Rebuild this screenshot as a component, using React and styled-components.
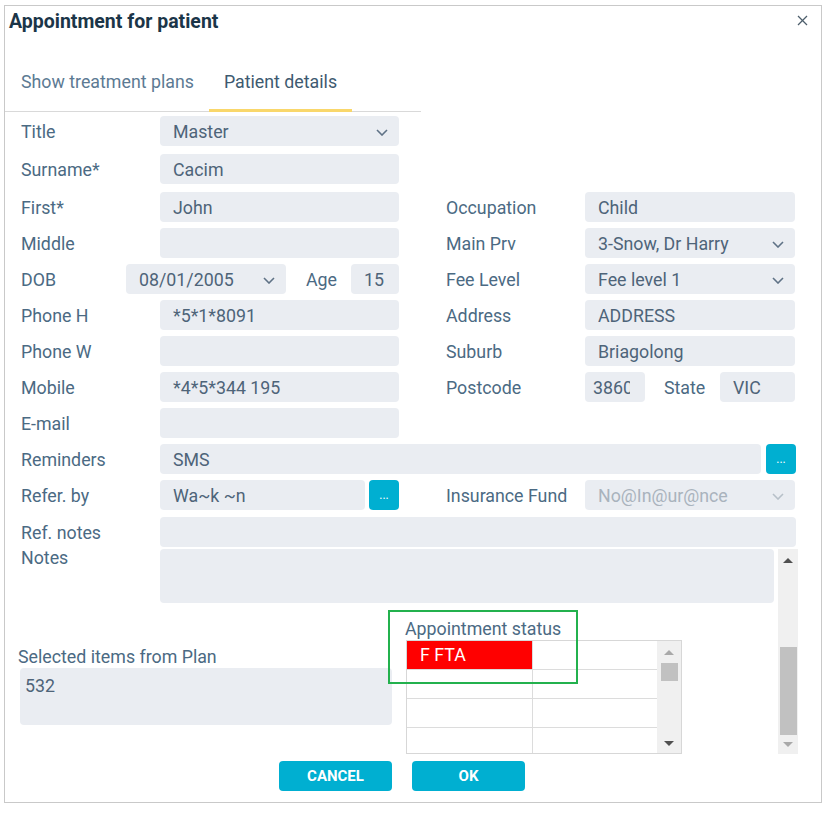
import React from 'react';
import styled, { createGlobalStyle } from 'styled-components';

const GlobalStyle = createGlobalStyle`
  * { box-sizing: border-box; }
  body {
    margin: 0;
    background: #fff;
    font-family: Roboto, "Liberation Sans", sans-serif;
  }
`;

const Chevron = ({ muted }) => (
  <svg width="12" height="7" viewBox="0 0 12 7">
    <polyline points="1,1 6,6 11,1" fill="none" stroke={muted ? '#b7c0c9' : '#5f7286'} strokeWidth="1.6" />
  </svg>
);

const CloseIcon = () => (
  <svg width="11" height="11" viewBox="0 0 11 11">
    <line x1="1" y1="1" x2="10" y2="10" stroke="#4d5e6c" strokeWidth="1.2" />
    <line x1="10" y1="1" x2="1" y2="10" stroke="#4d5e6c" strokeWidth="1.2" />
  </svg>
);

const App = () => {
  return (
    <>
      <GlobalStyle />
      <Dialog>
        <Header>
          <Title>Appointment for patient</Title>
          <CloseButton><CloseIcon /></CloseButton>
        </Header>

        <TabBar>
          <Tab>Show treatment plans</Tab>
          <Tab $active>Patient details</Tab>
        </TabBar>

        <Form>
          <Row $mb={2}>
            <Half>
              <Label>Title</Label>
              <Field><Value>Master</Value><Chevron /></Field>
            </Half>
          </Row>
          <Row $mb={2}>
            <Half>
              <Label>Surname*</Label>
              <Field><Value>Cacim</Value></Field>
            </Half>
          </Row>
          <Row>
            <Half>
              <Label>First*</Label>
              <Field><Value>John</Value></Field>
            </Half>
            <Half>
              <Label>Occupation</Label>
              <Field><Value>Child</Value></Field>
            </Half>
          </Row>
          <Row>
            <Half>
              <Label>Middle</Label>
              <Field />
            </Half>
            <Half>
              <Label>Main Prv</Label>
              <Field><Value>3-Snow, Dr Harry</Value><Chevron /></Field>
            </Half>
          </Row>
          <Row>
            <Half>
              <Label $w={105}>DOB</Label>
              <Field $w={160}><Value>08/01/2005</Value><Chevron /></Field>
              <Label $w={45} $ml={20}>Age</Label>
              <Field><Value>15</Value></Field>
            </Half>
            <Half>
              <Label>Fee Level</Label>
              <Field><Value>Fee level 1</Value><Chevron /></Field>
            </Half>
          </Row>
          <Row>
            <Half>
              <Label>Phone H</Label>
              <Field><Value>*5*1*8091</Value></Field>
            </Half>
            <Half>
              <Label>Address</Label>
              <Field><Value>ADDRESS</Value></Field>
            </Half>
          </Row>
          <Row>
            <Half>
              <Label>Phone W</Label>
              <Field />
            </Half>
            <Half>
              <Label>Suburb</Label>
              <Field><Value>Briagolong</Value></Field>
            </Half>
          </Row>
          <Row>
            <Half>
              <Label>Mobile</Label>
              <Field><Value>*4*5*344 195</Value></Field>
            </Half>
            <Half>
              <Label>Postcode</Label>
              <Field $w={60} $pl={8} $pr={15}><Value>3860</Value></Field>
              <Label $w={56} $ml={19}>State</Label>
              <Field><Value>VIC</Value></Field>
            </Half>
          </Row>
          <Row>
            <Half>
              <Label>E-mail</Label>
              <Field />
            </Half>
          </Row>
          <FullRow>
            <Label>Reminders</Label>
            <Field><Value>SMS</Value></Field>
            <DotsButton $ml={5}>...</DotsButton>
          </FullRow>
          <Row $mb={1}>
            <Half>
              <Label>Refer. by</Label>
              <Field><Value>Wa~k ~n</Value></Field>
              <DotsButton $ml={4}>...</DotsButton>
            </Half>
            <Half>
              <Label>Insurance Fund</Label>
              <Field $muted><Value>No@In@ur@nce</Value><Chevron muted /></Field>
            </Half>
          </Row>
          <FullRow>
            <Label>Ref. notes</Label>
            <Field />
          </FullRow>

          <NotesSection>
            <NotesMain>
              <NotesRow>
                <NotesLabel>Notes</NotesLabel>
                <TextArea />
              </NotesRow>

              <BottomArea>
                <SelectedCol>
                  <SectionLabel>Selected items from Plan</SectionLabel>
                  <ItemsBox>532</ItemsBox>
                </SelectedCol>

                <StatusCol>
                  <SectionLabel>Appointment status</SectionLabel>
                  <StatusTable>
                    <Cells>
                      <Cell $status>F FTA</Cell>
                      <Cell />
                      <Cell />
                      <Cell />
                      <Cell />
                      <Cell />
                      <Cell />
                      <Cell />
                    </Cells>
                    <MiniScroll>
                      <ArrowUp $color="#a9a9a9" $mt={9} />
                      <Thumb $h={18} $mt={8} />
                      <Spacer />
                      <ArrowDown $color="#505050" $mb={7} />
                    </MiniScroll>
                  </StatusTable>
                  <Highlight />
                </StatusCol>
              </BottomArea>
            </NotesMain>

            <MainScroll>
              <ArrowUp $color="#505050" $mt={9} />
              <Thumb $h={88} $mt={84} />
              <ArrowDown $color="#a9a9a9" $mt={7} />
            </MainScroll>
          </NotesSection>
        </Form>

        <ButtonRow>
          <ActionButton>Cancel</ActionButton>
          <ActionButton>OK</ActionButton>
        </ButtonRow>
      </Dialog>
    </>
  );
};

export default App;

const Dialog = styled.div`
  width: 818px;
  height: 798px;
  margin: 5px 0 0 4px;
  border: 1px solid #c9c9c9;
  background: #fff;
  display: flex;
  flex-direction: column;
`;

const Header = styled.div`
  display: flex;
  justify-content: space-between;
  align-items: flex-start;
  padding: 4px 13px 0 4px;
`;

const Title = styled.h1`
  margin: 0;
  font-size: 19.5px;
  line-height: 24px;
  font-weight: 700;
  color: #1b3548;
`;

const CloseButton = styled.div`
  margin-top: 5px;
  width: 11px;
  height: 11px;
  display: flex;
`;

const TabBar = styled.div`
  margin-top: 38px;
  width: 416px;
  display: flex;
  padding-left: 1px;
  border-bottom: 1px solid #d9d9d9;
`;

const Tab = styled.div`
  padding: 0 15px 17px;
  margin-bottom: -1px;
  font-size: 17.8px;
  line-height: 20px;
  color: ${p => (p.$active ? '#3e5a70' : '#5c7a93')};
  border-bottom: 3px solid ${p => (p.$active ? '#f9d76b' : 'transparent')};
  white-space: nowrap;
`;

const Form = styled.div`
  display: flex;
  flex-direction: column;
  gap: 6px;
  padding: 4px 25px 0 16px;
`;

const Row = styled.div`
  display: grid;
  grid-template-columns: 378px 349px;
  column-gap: 47px;
  height: 30px;
  margin-bottom: ${p => p.$mb || 0}px;
`;

const FullRow = styled.div`
  display: flex;
  align-items: center;
  height: 30px;
`;

const Half = styled.div`
  display: flex;
  align-items: center;
  min-width: 0;
`;

const Label = styled.div`
  width: ${p => p.$w || 139}px;
  flex-shrink: 0;
  margin-left: ${p => p.$ml || 0}px;
  padding-top: 2px;
  font-size: 17.8px;
  line-height: 20px;
  color: #4b6a83;
  white-space: nowrap;
`;

const Field = styled.div`
  flex: ${p => (p.$w ? `0 0 ${p.$w}px` : '1 1 0')};
  min-width: 0;
  height: 30px;
  display: flex;
  align-items: center;
  justify-content: space-between;
  gap: 6px;
  padding: 2px ${p => p.$pr || 11}px 0 ${p => p.$pl || 13}px;
  background: #eaedf2;
  border-radius: 4px;
  font-size: 17.8px;
  line-height: 20px;
  color: ${p => (p.$muted ? '#a9b3bd' : '#4e6479')};
  white-space: nowrap;
`;

const Value = styled.span`
  flex: 1;
  min-width: 0;
  overflow: hidden;
`;

const DotsButton = styled.div`
  width: 30px;
  height: 30px;
  flex-shrink: 0;
  margin-left: ${p => p.$ml || 0}px;
  background: #00afd1;
  border-radius: 4px;
  color: #fff;
  font-size: 12px;
  display: flex;
  align-items: center;
  justify-content: center;
`;

const NotesSection = styled.div`
  display: flex;
  height: 205px;
  margin-top: -4px;
  margin-right: -2px;
`;

const NotesMain = styled.div`
  flex: 1;
  display: flex;
  flex-direction: column;
`;

const NotesRow = styled.div`
  display: flex;
  align-items: flex-start;
  height: 54px;
`;

const NotesLabel = styled(Label)`
  margin-top: -3px;
`;

const TextArea = styled.div`
  flex: 1;
  height: 54px;
  background: #eaedf2;
  border-radius: 4px;
`;

const BottomArea = styled.div`
  display: flex;
  align-items: flex-start;
  margin-left: -3px;
  height: 151px;
`;

const SelectedCol = styled.div`
  width: 374px;
  padding-top: 44px;
`;

const SectionLabel = styled.div`
  font-size: 17.8px;
  line-height: 20px;
  color: #4b6a83;
  white-space: nowrap;
`;

const ItemsBox = styled.div`
  margin: 1px 0 0 2px;
  height: 57px;
  padding: 8px 5px;
  background: #eaedf2;
  border-radius: 4px;
  font-size: 17.8px;
  line-height: 20px;
  color: #4e6479;
`;

const StatusCol = styled.div`
  position: relative;
  margin-left: 13px;
  padding-top: 16px;
`;

const StatusTable = styled.div`
  margin: 1px 0 0 1px;
  width: 276px;
  height: 114px;
  border: 1px solid #d7d7d7;
  display: flex;
`;

const Cells = styled.div`
  display: grid;
  grid-template-columns: 126px 125px;
  grid-auto-rows: 29px;
  align-content: start;
  overflow: hidden;
`;

const Cell = styled.div`
  border-right: 1px solid #dcdcdc;
  border-bottom: 1px solid #dcdcdc;
  background: ${p => (p.$status ? '#ff0000' : '#fff')};
  color: #fff;
  font-size: 17.8px;
  line-height: 28px;
  padding-left: 13px;
  white-space: nowrap;
`;

const MiniScroll = styled.div`
  width: 24px;
  background: #f0f0f0;
  display: flex;
  flex-direction: column;
  align-items: center;
`;

const MainScroll = styled.div`
  width: 20px;
  margin-left: 4px;
  background: #f0f0f0;
  display: flex;
  flex-direction: column;
  align-items: center;
`;

const ArrowUp = styled.div`
  width: 0;
  height: 0;
  margin-top: ${p => p.$mt || 0}px;
  border-left: 5px solid transparent;
  border-right: 5px solid transparent;
  border-bottom: 5px solid ${p => p.$color};
`;

const ArrowDown = styled.div`
  width: 0;
  height: 0;
  margin-top: ${p => p.$mt || 0}px;
  margin-bottom: ${p => p.$mb || 0}px;
  border-left: 5px solid transparent;
  border-right: 5px solid transparent;
  border-top: 5px solid ${p => p.$color};
`;

const Thumb = styled.div`
  width: 17px;
  height: ${p => p.$h}px;
  margin-top: ${p => p.$mt || 0}px;
  background: #c1c1c1;
`;

const Spacer = styled.div`
  flex: 1;
`;

const Highlight = styled.div`
  position: absolute;
  left: -17px;
  top: 7px;
  width: 190px;
  height: 74px;
  border: 2px solid #23b14d;
  pointer-events: none;
`;

const ButtonRow = styled.div`
  display: flex;
  gap: 20px;
  padding-left: 274px;
  margin-top: 7px;
`;

const ActionButton = styled.button`
  width: 113px;
  height: 30px;
  border: none;
  border-radius: 4px;
  background: #00afd1;
  color: #fff;
  font-family: Roboto, "Liberation Sans", sans-serif;
  font-size: 15px;
  font-weight: 700;
  text-transform: uppercase;
  padding: 0 0 0 0;
  line-height: 30px;
`;
